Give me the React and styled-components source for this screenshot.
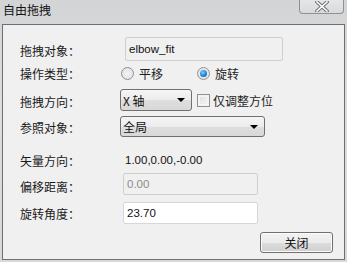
import styled, { createGlobalStyle } from "styled-components";

const GlobalStyle = createGlobalStyle`
  html, body {
    margin: 0;
    padding: 0;
  }
  body {
    width: 347px;
    height: 262px;
    overflow: hidden;
    background: linear-gradient(180deg, #d3d4d6 0%, #dcdddf 40%, #d7d8da 100%);
    font-family: "Noto Sans CJK SC", "Liberation Sans", sans-serif;
    font-size: 12px;
    color: #1e1e1e;
  }
`;

const Window = styled.div`
  width: 347px;
  height: 262px;
  display: flex;
  flex-direction: column;
`;

const TitleBar = styled.div`
  height: 24px;
  display: flex;
  align-items: flex-start;
  justify-content: space-between;
  padding-left: 3px;
  padding-right: 3px;
`;

const Title = styled.div`
  font-size: 12px;
  line-height: 20px;
  color: #111;
`;

const CloseX = styled.div`
  width: 45px;
  height: 15px;
  margin-top: -1px;
  box-sizing: border-box;
  border: 1px solid #8e9196;
  border-top: none;
  border-radius: 0 0 4px 4px;
  background: linear-gradient(180deg, #e6e7e9 0%, #d9dadc 100%);
  display: flex;
  align-items: center;
  justify-content: center;
`;

const Panel = styled.div`
  margin-left: 2px;
  width: 343px;
  height: 236px;
  box-sizing: border-box;
  border: 1px solid #6f6f6f;
  background: #f0f0f0;
  padding: 12px 0 0 17px;
  display: flex;
  flex-direction: column;
`;

const Row = styled.div`
  display: flex;
  align-items: center;
  height: ${(p) => p.$h}px;
  margin-top: ${(p) => p.$mt || 0}px;
`;

const Label = styled.div`
  width: 100px;
  flex: none;
  font-size: 12px;
  color: #1a1a1a;
  position: relative;
  top: ${(p) => p.$dy || 0}px;
`;

const TextBox = styled.div`
  box-sizing: border-box;
  width: ${(p) => p.$w}px;
  height: 100%;
  margin-left: ${(p) => p.$ml}px;
  border: 1px solid ${(p) => (p.$white ? "#d3d6da" : "#cfcfcf")};
  border-radius: 2px;
  background: ${(p) => (p.$white ? "#ffffff" : "#f0f0f0")};
  display: flex;
  align-items: center;
  padding-left: 3px;
  font-family: "Liberation Sans", Arial, sans-serif;
  font-size: 11.5px;
  color: ${(p) => (p.$dim ? "#8c8c8c" : "#111")};
`;

const Plain = styled.div`
  margin-left: 5px;
  font-family: "Liberation Sans", Arial, sans-serif;
  font-size: 11.5px;
  color: #111;
`;

const RadioGroup = styled.div`
  display: flex;
  align-items: center;
  margin-left: 1px;
`;

const RadioItem = styled.label`
  display: flex;
  align-items: center;
  gap: 5px;
  width: 76px;
`;

const RadioDot = styled.span`
  box-sizing: border-box;
  width: 13px;
  height: 13px;
  border-radius: 50%;
  border: 1px solid #8f9396;
  background: radial-gradient(circle, #f4f4f4 0%, #dcdcdc 100%);
  display: flex;
  align-items: center;
  justify-content: center;
  &::after {
    content: "";
    display: ${(p) => (p.$on ? "block" : "none")};
    width: 7px;
    height: 7px;
    border-radius: 50%;
    background: radial-gradient(circle at 40% 35%, #7fd0ff 0%, #1e86d6 55%, #16467a 100%);
  }
`;

const Combo = styled.div`
  box-sizing: border-box;
  width: ${(p) => p.$w}px;
  height: 100%;
  border: 1px solid #707070;
  border-radius: 3px;
  background: linear-gradient(180deg, #f5f5f5 0%, #ececec 50%, #dedede 51%, #d8d8d8 100%);
  display: flex;
  align-items: center;
  justify-content: space-between;
  padding: 0 6px 0 2px;
  font-size: 12px;
  color: #111;
`;

const Arrow = styled.span`
  width: 0;
  height: 0;
  border-left: 4px solid transparent;
  border-right: 4px solid transparent;
  border-top: 4px solid #000;
`;

const Check = styled.label`
  display: flex;
  align-items: center;
  gap: 3px;
  margin-left: 5px;
  font-size: 12px;
`;

const CheckBox = styled.span`
  box-sizing: border-box;
  width: 13px;
  height: 13px;
  border: 1px solid #8f8f8f;
  background: linear-gradient(135deg, #dcdcdc 0%, #f7f7f7 100%);
  box-shadow: inset 0 0 0 2px #f3f3f3;
`;

const Footer = styled.div`
  display: flex;
  justify-content: flex-end;
  margin-top: 8px;
  padding-right: 11px;
`;

const Button = styled.div`
  box-sizing: border-box;
  width: 73px;
  height: 21px;
  border: 1px solid #707070;
  border-radius: 3px;
  background: linear-gradient(180deg, #f2f2f2 0%, #ebebeb 50%, #dddddd 51%, #cfcfcf 100%);
  box-shadow: inset 0 0 0 1px #fbfbfb;
  display: flex;
  align-items: center;
  justify-content: center;
  font-size: 12px;
  color: #111;
`;

export default function App() {
  return (
    <Window>
      <GlobalStyle />
      <TitleBar>
        <Title>自由拖拽</Title>
        <CloseX>
          <svg width="14" height="11" viewBox="0 0 14 11">
            <path d="M2 1 L12 10 M12 1 L2 10" stroke="#6f7378" strokeWidth="3.6" strokeLinecap="square" />
            <path d="M2 1 L12 10 M12 1 L2 10" stroke="#ffffff" strokeWidth="1.6" strokeLinecap="square" />
          </svg>
        </CloseX>
      </TitleBar>
      <Panel>
        <Row $h={24}>
          <Label $dy={1}>拖拽对象：</Label>
          <TextBox $w={158} $ml={5}>elbow_fit</TextBox>
        </Row>
        <Row $h={23} $mt={1}>
          <Label>操作类型：</Label>
          <RadioGroup>
            <RadioItem>
              <RadioDot />
              平移
            </RadioItem>
            <RadioItem>
              <RadioDot $on />
              旋转
            </RadioItem>
          </RadioGroup>
        </Row>
        <Row $h={22} $mt={4}>
          <Label $dy={1}>拖拽方向：</Label>
          <Combo $w={72}>
            <span>X 轴</span>
            <Arrow />
          </Combo>
          <Check>
            <CheckBox />
            仅调整方位
          </Check>
        </Row>
        <Row $h={21} $mt={5}>
          <Label $dy={1}>参照对象：</Label>
          <Combo $w={145}>
            <span>全局</span>
            <Arrow />
          </Combo>
        </Row>
        <Row $h={22} $mt={12}>
          <Label>矢量方向：</Label>
          <Plain>1.00,0.00,-0.00</Plain>
        </Row>
        <Row $h={22} $mt={2}>
          <Label $dy={2}>偏移距离：</Label>
          <TextBox $w={135} $ml={3} $dim>0.00</TextBox>
        </Row>
        <Row $h={22} $mt={7}>
          <Label>旋转角度：</Label>
          <TextBox $w={135} $ml={3} $white>23.70</TextBox>
        </Row>
        <Footer>
          <Button>关闭</Button>
        </Footer>
      </Panel>
    </Window>
  );
}
